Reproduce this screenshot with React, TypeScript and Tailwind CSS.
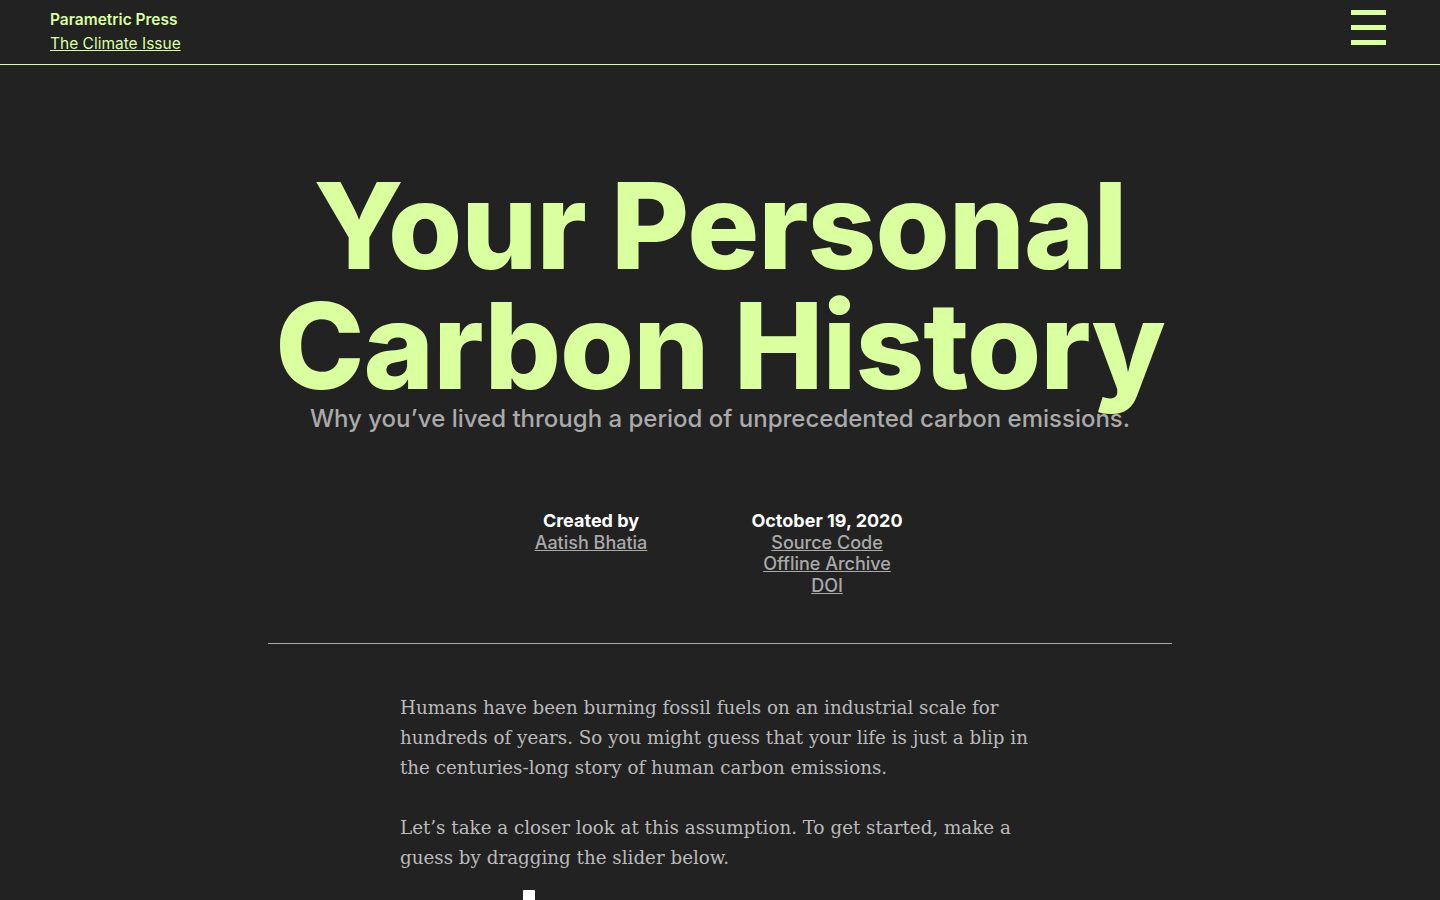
import { Fragment } from "react";

const sans = "font-['Inter','Noto_Sans',sans-serif]";
const serif = "font-['DejaVu_Serif','Liberation_Serif',serif]";

const byline = [
  { head: "Created by", links: ["Aatish Bhatia"] },
  { head: "October 19, 2020", links: ["Source Code", "Offline Archive", "DOI"] },
];

export default function App() {
  return (
    <div className={`min-h-[900px] bg-[#222222] ${sans}`}>
      {/* Top bar */}
      <header className="flex h-[65px] items-start justify-between border-b border-[#daff9e] pl-[50px] pr-[54px]">
        <div className="pt-[8px] text-[15.5px] leading-[24px] text-[#daff9e]">
          <div className="font-semibold">Parametric Press</div>
          <a href="#" className="underline">The Climate Issue</a>
        </div>
        <button className="mt-[10px] flex w-[35px] flex-col gap-[10px]">
          <span className="block h-[5px] bg-[#daff9e]" />
          <span className="block h-[5px] bg-[#daff9e]" />
          <span className="block h-[5px] bg-[#daff9e]" />
        </button>
      </header>

      {/* Hero */}
      <section className="flex flex-col items-center pt-[101px] text-center">
        <h1 className="text-[120px] font-extrabold leading-[120px] tracking-[-1px] text-[#daff9e]">
          Your Personal
          <br />
          Carbon History
        </h1>
        <p className="-mt-[2px] text-[24px] font-medium leading-[30px] text-[#aaaaaa]">
          Why you’ve lived through a period of unprecedented carbon emissions.
        </p>
      </section>

      {/* Byline */}
      <section className="mt-[76px] flex justify-center gap-[56px] pr-[22px]">
        {byline.map((col) => (
          <div key={col.head} className="flex w-[180px] flex-col items-center text-[18px] leading-[21.5px]">
            <div className="font-bold text-white">{col.head}</div>
            {col.links.map((l) => (
              <Fragment key={l}>
                <a href="#" className="font-medium text-[#aaaaaa] underline">{l}</a>
              </Fragment>
            ))}
          </div>
        ))}
      </section>

      <hr className="mx-auto mt-[47px] w-[904px] border-t border-[#aaaaaa]" />

      {/* Body */}
      <article className={`mx-auto mt-[49px] w-[640px] pr-[6px] text-[18.3px] leading-[30px] text-[#bbbbbb] ${serif}`}>
        <p>
          Humans have been burning fossil fuels on an industrial scale for hundreds of years. So you might
          guess that your life is just a blip in the centuries-long story of human carbon emissions.
        </p>
        <p className="mt-[30px]">
          Let’s take a closer look at this assumption. To get started, make a guess by dragging the slider below.
        </p>
        <div className="relative mt-[16px] h-[40px]">
          <div className="absolute left-[122px] top-0 h-[20px] w-[14px] rounded-[2px] border border-[#222222] bg-white" />
        </div>
      </article>
    </div>
  );
}
